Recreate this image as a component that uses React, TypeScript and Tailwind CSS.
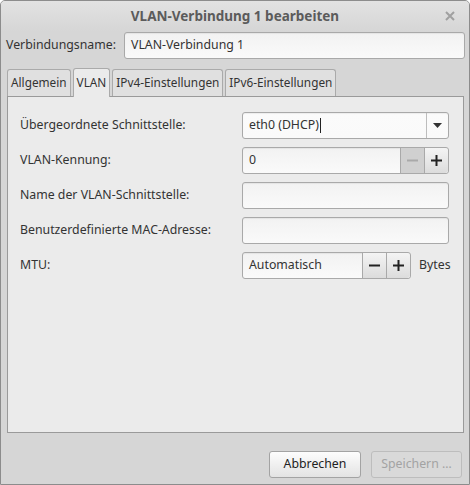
import React from 'react';

const inputCls =
  'h-[27px] rounded-[3px] border border-[#a9a9a9] bg-gradient-to-b from-[#f2f2f2] to-[#fafafa] shadow-[inset_0_1px_1px_rgba(0,0,0,0.06)]';

const tabCls = 'h-[27px] px-[3px] flex items-center rounded-t-[3px] border border-b-0 border-[#aaaaaa] bg-[#e0e0e0]';

function Row({ label, children }: { label: string; children: React.ReactNode }) {
  return (
    <div className="flex items-center h-[27px]">
      <div className="w-[222px] shrink-0">{label}</div>
      <div className="flex-1 flex items-center">{children}</div>
    </div>
  );
}

function SpinButtons({ minusDisabled }: { minusDisabled?: boolean }) {
  return (
    <div className="flex h-full">
      <div
        className={`w-[24px] flex items-center justify-center border-l border-[#a9a9a9] ${
          minusDisabled ? 'bg-[#d0d0d0] text-[#a9a9a9]' : 'bg-gradient-to-b from-[#f4f4f4] to-[#dcdcdc] text-[#222]'
        }`}
      >
        <svg width="11" height="11" viewBox="0 0 11 11">
          <rect x="0" y="4.5" width="11" height="2" fill="currentColor" />
        </svg>
      </div>
      <div className="w-[24px] flex items-center justify-center border-l border-[#a9a9a9] bg-gradient-to-b from-[#f4f4f4] to-[#dcdcdc] text-[#222] rounded-r-[3px]">
        <svg width="11" height="11" viewBox="0 0 11 11">
          <rect x="0" y="4.5" width="11" height="2" fill="currentColor" />
          <rect x="4.5" y="0" width="2" height="11" fill="currentColor" />
        </svg>
      </div>
    </div>
  );
}

export default function App() {
  return (
    <div className="w-[470px] h-[485px] flex flex-col bg-[#d6d6d6] border border-[#8c8c8c] rounded-t-[5px] overflow-hidden font-['Noto_Sans',sans-serif] text-[12.3px] text-[#333]">
      <div className="relative h-[30px] shrink-0 flex items-center justify-center bg-gradient-to-b from-[#e2e2e2] to-[#d6d6d6]">
        <span className="font-bold text-[13.5px] text-[#5b5b5b]">VLAN-Verbindung 1 bearbeiten</span>
        <svg className="absolute right-[14px] top-[10px]" width="10" height="10" viewBox="0 0 10 10">
          <path d="M1 1 L9 9 M9 1 L1 9" stroke="#a0a0a0" strokeWidth="2" />
        </svg>
      </div>

      <div className="flex items-center pl-[5px] pr-[4px] mt-[1px]">
        <div className="w-[118px] shrink-0">Verbindungsname:</div>
        <div className={`flex-1 flex items-center px-[6px] h-[26px] ${inputCls}`}>VLAN-Verbindung 1</div>
      </div>

      <div className="flex items-end gap-[2px] pl-[6px] mt-[9px] h-[28px] text-[11.8px]">
        <div className={tabCls}>Allgemein</div>
        <div className="h-[29px] px-[3px] flex items-center rounded-t-[3px] border border-b-0 border-[#aaaaaa] bg-[#ebebeb] relative top-[1px] z-10">VLAN</div>
        <div className={tabCls}>IPv4-Einstellungen</div>
        <div className={tabCls}>IPv6-Einstellungen</div>
      </div>

      <div className="ml-[6px] mr-[5px] h-[337px] border border-[#9a9a9a] bg-[#ebebeb] pt-[15px] pl-[12px] pr-[14px] flex flex-col gap-[8px]">
        <Row label="Übergeordnete Schnittstelle:">
          <div className={`flex-1 flex items-center ${inputCls} bg-gradient-to-b from-[#fbfbfb] to-[#ececec]`}>
            <div className="flex-1 px-[6px] flex items-center">
              eth0 (DHCP)<span className="inline-block w-[1px] h-[15px] bg-[#222] ml-[1px]" />
            </div>
            <div className="w-[22px] h-full flex items-center justify-center border-l border-[#bdbdbd]">
              <svg width="9" height="5" viewBox="0 0 9 5">
                <path d="M0 0 L9 0 L4.5 5 Z" fill="#333" />
              </svg>
            </div>
          </div>
        </Row>
        <Row label="VLAN-Kennung:">
          <div className={`flex-1 flex items-center overflow-hidden ${inputCls}`}>
            <div className="flex-1 px-[6px]">0</div>
            <SpinButtons minusDisabled />
          </div>
        </Row>
        <Row label="Name der VLAN-Schnittstelle:">
          <div className={`flex-1 ${inputCls}`} />
        </Row>
        <Row label="Benutzerdefinierte MAC-Adresse:">
          <div className={`flex-1 ${inputCls}`} />
        </Row>
        <Row label="MTU:">
          <div className={`w-[169px] flex items-center overflow-hidden ${inputCls}`}>
            <div className="flex-1 px-[6px]">Automatisch</div>
            <SpinButtons />
          </div>
          <span className="ml-[8px]">Bytes</span>
        </Row>
      </div>

      <div className="flex justify-end gap-[10px] pr-[7px] mt-[18px]">
        <div className="w-[92px] h-[27px] flex items-center justify-center rounded-[3px] border border-[#a3a3a3] bg-gradient-to-b from-[#fdfdfd] to-[#e3e3e3] text-[#222]">
          Abbrechen
        </div>
        <div className="w-[91px] h-[27px] flex items-center justify-center rounded-[3px] border border-[#bdbdbd] bg-[#d9d9d9] text-[#a3a3a3]">
          Speichern …
        </div>
      </div>
    </div>
  );
}
